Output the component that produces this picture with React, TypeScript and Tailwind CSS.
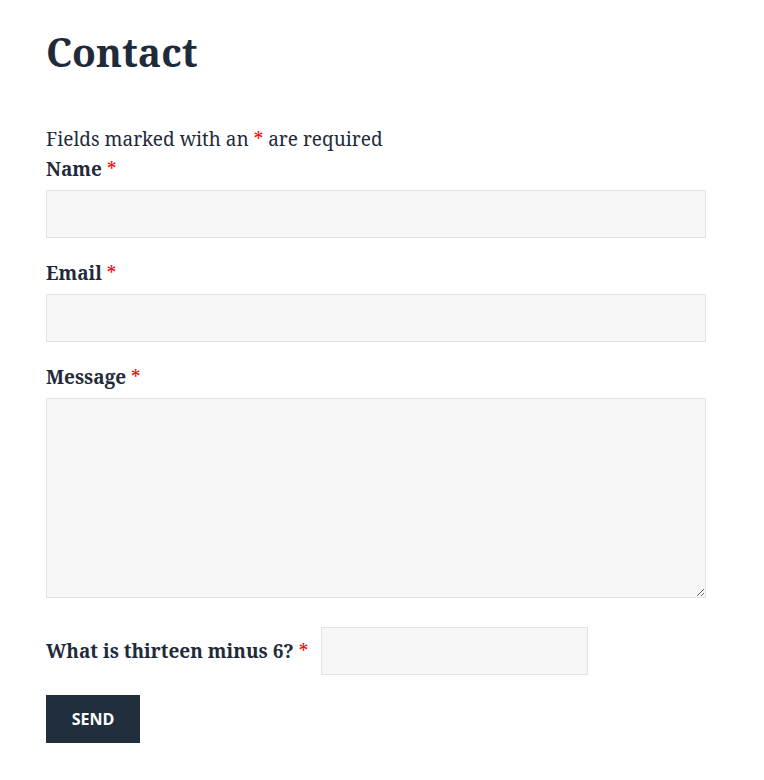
export default function App() {
  const serif = "font-['Noto_Serif','DejaVu_Serif',serif]"
  const Req = () => <span className="text-[#ff0000] font-normal">*</span>
  return (
    <div className={`${serif} text-[#1f2b3a] bg-white min-h-[780px] px-[46px] pt-[26px]`}>
      <h1 className="text-[39px] font-bold leading-[52px]">Contact</h1>
      <form className="mt-[47px] w-[660px]" onSubmit={(e) => e.preventDefault()}>
        <p className="text-[19px] leading-[28px]">
          Fields marked with an <Req /> are required
        </p>
        <label className="block text-[19px] font-bold leading-[32px]">
          Name <Req />
        </label>
        <input className="mt-[5px] block w-full h-[48px] bg-[#f7f7f7] border border-[#e2e2e2] outline-none" />
        <label className="block mt-[19px] text-[19px] font-bold leading-[32px]">
          Email <Req />
        </label>
        <input className="mt-[5px] block w-full h-[48px] bg-[#f7f7f7] border border-[#e2e2e2] outline-none" />
        <label className="block mt-[19px] text-[19px] font-bold leading-[32px]">
          Message <Req />
        </label>
        <textarea className="mt-[5px] block w-full h-[200px] bg-[#f7f7f7] border border-[#e2e2e2] outline-none" />
        <div className="mt-[29px] flex items-center gap-[13px]">
          <label className="text-[19px] font-bold leading-[32px]">
            What is thirteen minus 6? <Req />
          </label>
          <input className="block w-[267px] h-[48px] bg-[#f7f7f7] border border-[#e2e2e2] outline-none" />
        </div>
        <button
          type="submit"
          className="mt-[20px] block w-[94px] h-[48px] bg-[#212e3e] text-white text-[16px] font-bold font-['Open_Sans','Noto_Sans',sans-serif] uppercase"
        >
          Send
        </button>
      </form>
    </div>
  )
}
